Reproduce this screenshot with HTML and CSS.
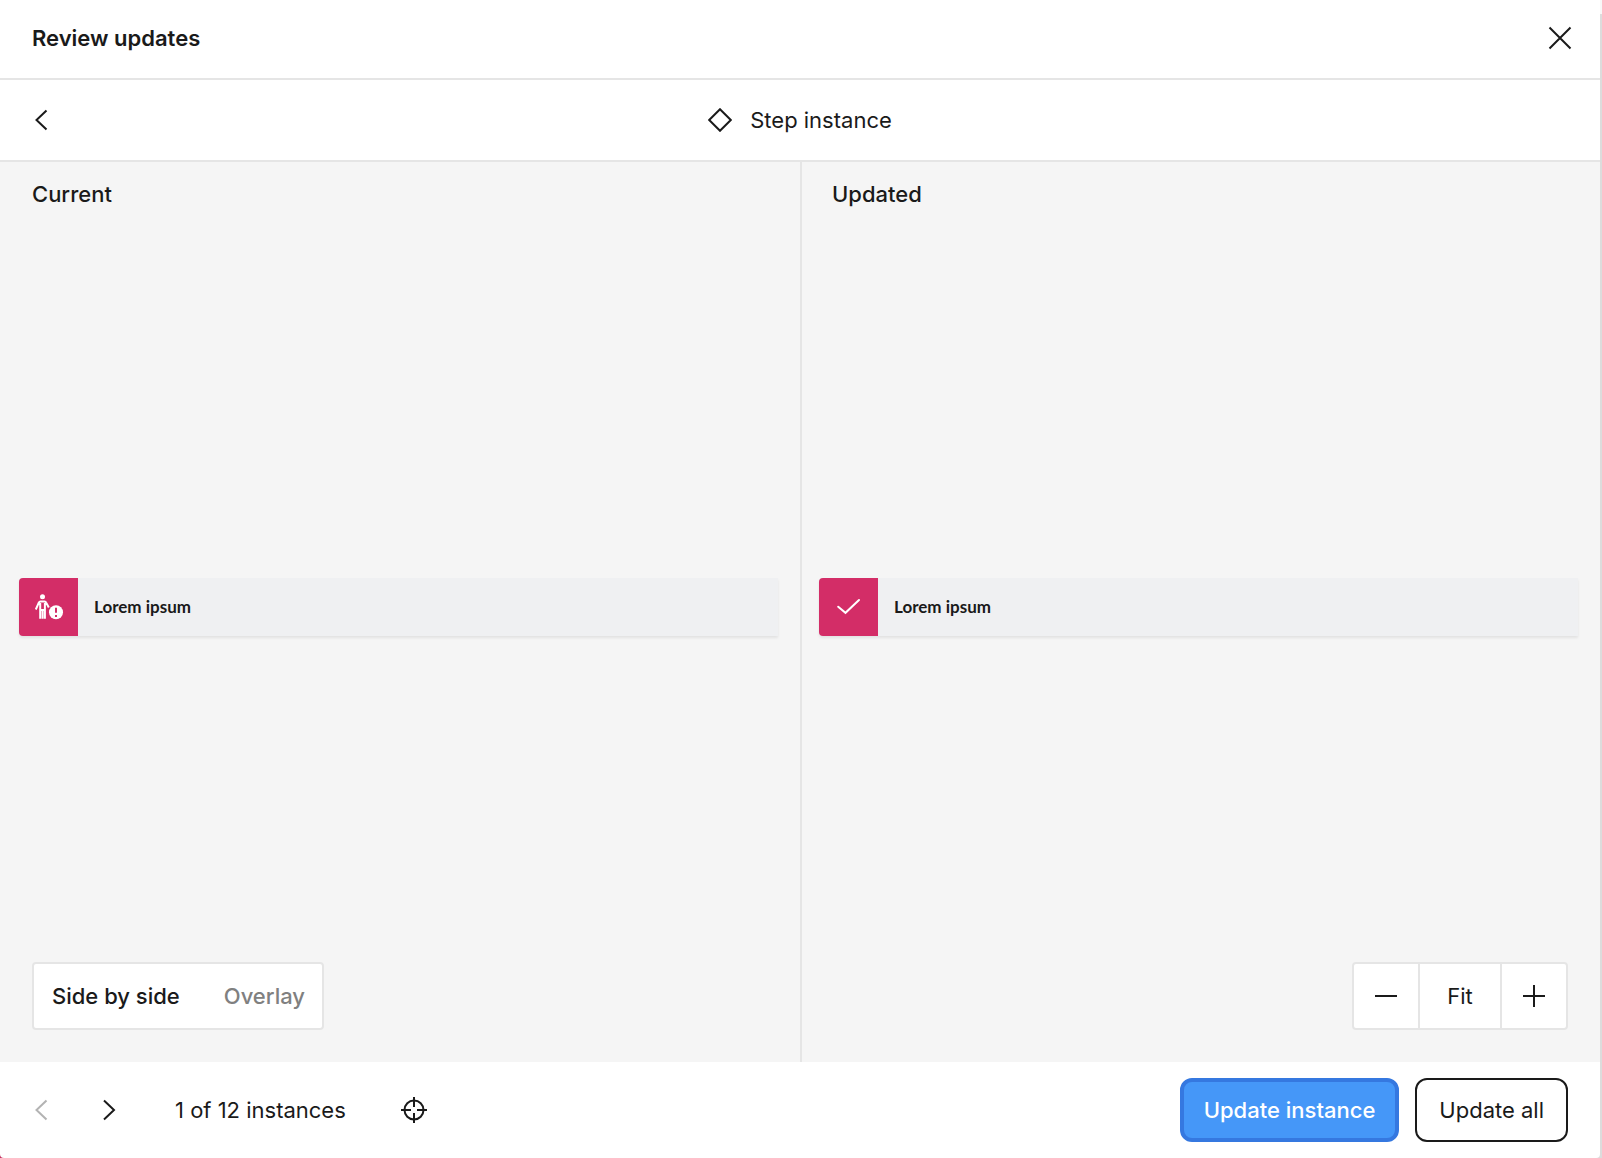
FILE: index.html
```html
<!DOCTYPE html>
<html lang="en">
<head>
<meta charset="utf-8">
<meta name="viewport" content="width=device-width, initial-scale=1">
<title>Review updates</title>
<link rel="stylesheet" href="styles.css">
</head>
<body>
<main class="dialog">
  <header class="bar">
    <h1 class="title">Review updates</h1>
    <button class="icon-button" type="button" aria-label="Close">
      <svg class="icon" viewBox="0 0 32 32"><path d="M5.500 5.500 26.500 26.500M26.500 5.500 5.500 26.500"/></svg>
    </button>
  </header>

  <nav class="bar bar-centered">
    <button class="icon-button" type="button" aria-label="Back">
      <svg class="icon" viewBox="0 0 32 32"><path d="M22.500 6.500 12.500 16 22.500 25.500"/></svg>
    </button>
    <h2 class="instance-name">
      <svg class="icon-small" viewBox="0 0 24 24" aria-hidden="true"><path d="M12 1.200 22.800 12 12 22.800 1.200 12Z"/></svg>
      Step instance
    </h2>
  </nav>

  <div class="compare">
    <section class="pane">
      <h3 class="pane-title">Current</h3>
      <div class="preview">
        <div class="step">
          <svg class="step-icon" viewBox="0 0 59 58" aria-hidden="true">
            <circle class="solid" cx="23.500" cy="18.800" r="2.500"/>
            <path class="line" d="M16.800 31.500 19.800 24.600Q20.300 23.500 21.500 23.500H25.500Q26.700 23.500 27.200 24.600L29.800 29.500M21.200 25V40.800M25.900 25V40.800M21.300 32H25.900M23.600 33V40.800"/>
            <circle class="solid" cx="37" cy="34.300" r="7"/>
            <path class="mark" d="M37 29.800V34.800M37 37V39"/>
          </svg>
          <span class="step-label">Lorem ipsum</span>
        </div>
      </div>
      <div class="tools">
        <div class="view-toggle" role="group" aria-label="View mode">
          <button class="view-option view-option-on" type="button" aria-pressed="true">Side by side</button>
          <button class="view-option" type="button" aria-pressed="false">Overlay</button>
        </div>
      </div>
    </section>

    <section class="pane pane-updated">
      <h3 class="pane-title">Updated</h3>
      <div class="preview">
        <div class="step">
          <svg class="step-icon" viewBox="0 0 59 58" aria-hidden="true">
            <path class="check" d="M19.200 28.700 26.500 34.800 40 22"/>
          </svg>
          <span class="step-label">Lorem ipsum</span>
        </div>
      </div>
      <div class="tools tools-end">
        <div class="zoom" role="group" aria-label="Zoom">
          <button class="zoom-button" type="button" aria-label="Zoom out">
            <svg class="icon" viewBox="0 0 32 32"><path d="M5 16H27"/></svg>
          </button>
          <button class="zoom-button zoom-fit" type="button">Fit</button>
          <button class="zoom-button" type="button" aria-label="Zoom in">
            <svg class="icon" viewBox="0 0 32 32"><path d="M5 16H27M16 5V27"/></svg>
          </button>
        </div>
      </div>
    </section>
  </div>

  <footer class="footer">
    <div class="pager">
      <button class="icon-button" type="button" aria-label="Previous instance" disabled>
        <svg class="icon" viewBox="0 0 32 32"><path d="M22.500 6.500 12.500 16 22.500 25.500"/></svg>
      </button>
      <button class="icon-button" type="button" aria-label="Next instance">
        <svg class="icon" viewBox="0 0 32 32"><path d="M12 6.500 22 16 12 25.500"/></svg>
      </button>
    </div>
    <span class="count">1 of 12 instances</span>
    <button class="icon-button" type="button" aria-label="Locate instance">
      <svg class="icon" viewBox="0 0 32 32"><circle cx="16" cy="16" r="9.500"/><path d="M16 3V13M16 19V29M3 16H13M19 16H29"/></svg>
    </button>
    <div class="actions">
      <button class="button button-primary" type="button">Update instance</button>
      <button class="button" type="button">Update all</button>
    </div>
  </footer>
</main>
</body>
</html>
```
FILE: styles.css
```css
* {
  box-sizing: border-box;
}

body {
  margin: 0;
  padding-right: 2px;
  background:
    linear-gradient(#c2305f, #c2305f) left bottom / 8px 8px no-repeat,
    linear-gradient(#f8f8f8 14px, #dcdcdc 14px);
  color: #1a1a1a;
  font: 400 22px/32px Inter, "Liberation Sans", sans-serif;
}

h1,
h2,
h3 {
  margin: 0;
  font-size: 22px;
}

button {
  padding: 0;
  border: 0;
  background: none;
  color: inherit;
  font: inherit;
  cursor: pointer;
}

.dialog {
  display: flex;
  flex-direction: column;
  min-height: 100vh;
  border-radius: 0 0 4px 4px;
  background: #fff;
}

.bar {
  display: flex;
  align-items: center;
  justify-content: space-between;
  padding: 22px 24px 24px 32px;
  border-bottom: 2px solid #e5e5e5;
}

.bar-centered {
  display: grid;
  grid-template-columns: 1fr auto 1fr;
  padding: 24px;
}

.title {
  font-weight: 600;
}

.icon-button {
  display: block;
  width: 32px;
  height: 32px;
}

.icon-button:disabled {
  color: #b3b3b3;
}

.icon,
.icon-small {
  display: block;
  width: 32px;
  height: 32px;
  fill: none;
  stroke: currentColor;
  stroke-width: 2;
}

.icon-small {
  width: 24px;
  height: 24px;
}

.instance-name {
  display: flex;
  align-items: center;
  gap: 18px;
  font-weight: 400;
}

.compare {
  display: grid;
  grid-template-columns: 1fr 1fr;
  flex: 1;
  background: #f5f5f5;
}

.pane {
  display: flex;
  flex-direction: column;
}

.pane-updated {
  border-left: 2px solid #e5e5e5;
}

.pane-title {
  padding: 16px 32px;
  font-weight: 500;
}

.pane-updated .pane-title {
  padding-left: 30px;
}

.preview {
  display: flex;
  flex: 1;
  align-items: center;
  padding: 26px 22px 0 19px;
}

.pane-updated .preview {
  padding-left: 17px;
}

.step {
  display: flex;
  flex: 1;
  align-items: center;
  gap: 16px;
  border-radius: 4px 0 0 4px;
  background: #eff0f2;
  box-shadow: 0 2px 3px rgba(0, 0, 0, 0.08);
}

.step-icon {
  width: 59px;
  height: 58px;
  border-radius: 4px 0 0 4px;
  background: #d32d67;
}

.step-label {
  font: 700 17px/24px Lato, sans-serif;
}

.solid {
  fill: #fff;
}

.line,
.mark,
.check {
  fill: none;
  stroke: #fff;
  stroke-width: 2;
}

.mark {
  stroke: #d32d67;
}

.check {
  stroke-linecap: round;
}

.tools {
  display: flex;
  padding: 0 32px 32px;
}

.tools-end {
  justify-content: flex-end;
}

.view-toggle,
.zoom {
  display: flex;
  height: 68px;
  border: 2px solid #e5e5e5;
  border-radius: 4px;
  background: #fff;
}

.view-toggle {
  gap: 44px;
  padding: 0 17px 0 18px;
}

.view-option {
  color: #808080;
  font-weight: 500;
}

.view-option-on {
  color: #1a1a1a;
}

.zoom-button {
  display: grid;
  place-items: center;
  width: 64px;
}

.zoom-fit {
  box-sizing: content-box;
  width: 80px;
  border: solid #e5e5e5;
  border-width: 0 2px;
}

.footer {
  display: flex;
  align-items: center;
  padding: 16px 32px 16px 24px;
}

.pager {
  display: flex;
  gap: 36px;
}

.count {
  margin: 0 52px 0 51px;
}

.actions {
  display: flex;
  gap: 16px;
  margin-left: auto;
}

.button {
  height: 64px;
  padding: 0 22px;
  border: 2px solid #1a1a1a;
  border-radius: 12px;
}

.button-primary {
  padding: 0 20px;
  border: 4px solid #3578e0;
  background: #4597f8;
  color: #fff;
  font-weight: 500;
}
```
